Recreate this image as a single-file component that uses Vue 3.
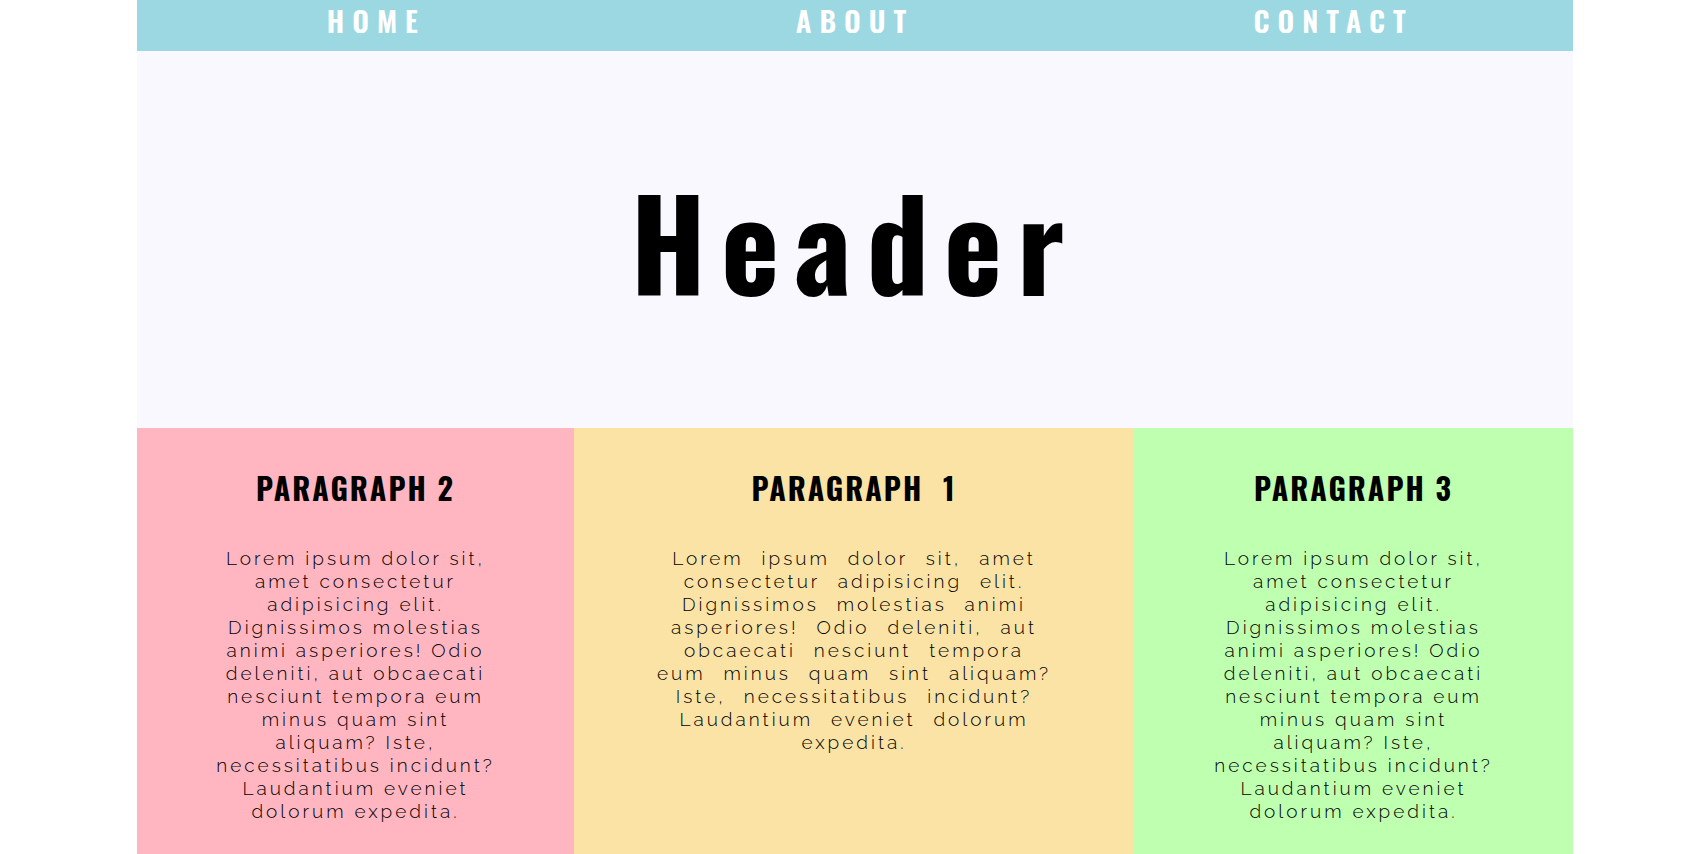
<script setup>
const links = [
  { label: 'HOME', href: '#home' },
  { label: 'ABOUT', href: '#about' },
  { label: 'CONTACT', href: '#contact' },
]

const narrowLines = [
  'Lorem ipsum dolor sit,',
  'amet consectetur',
  'adipisicing elit.',
  'Dignissimos molestias',
  'animi asperiores! Odio',
  'deleniti, aut obcaecati',
  'nesciunt tempora eum',
  'minus quam sint',
  'aliquam? Iste,',
  'necessitatibus incidunt?',
  'Laudantium eveniet',
  'dolorum expedita.',
]

const wideLines = [
  'Lorem ipsum dolor sit, amet',
  'consectetur adipisicing elit.',
  'Dignissimos molestias animi',
  'asperiores! Odio deleniti, aut',
  'obcaecati nesciunt tempora',
  'eum minus quam sint aliquam?',
  'Iste, necessitatibus incidunt?',
  'Laudantium eveniet dolorum',
  'expedita.',
]

const columns = [
  { title: 'PARAGRAPH 2', tone: 'pink', lines: narrowLines },
  { title: 'PARAGRAPH 1', tone: 'yellow', lines: wideLines },
  { title: 'PARAGRAPH 3', tone: 'green', lines: narrowLines },
]
</script>

<template>
  <div class="page">
    <nav class="nav">
      <a v-for="link in links" :key="link.label" class="nav-link" :href="link.href">{{ link.label }}</a>
    </nav>
    <header class="hero">
      <h1 class="hero-title">Header</h1>
    </header>
    <main class="columns">
      <section v-for="col in columns" :key="col.title" class="column" :class="col.tone">
        <h2 class="column-title">{{ col.title }}</h2>
        <p class="column-text">
          <span v-for="line in col.lines" :key="line" class="line">{{ line }} </span>
        </p>
      </section>
    </main>
  </div>
</template>

<style>
body {
  margin: 0;
  background: #ffffff;
}
</style>

<style scoped>
.page {
  box-sizing: border-box;
  display: flex;
  flex-direction: column;
  min-height: 100vh;
  padding: 0 135px 0 137px;
  font-family: Raleway, Lato, sans-serif;
  color: #000000;
}

.nav {
  display: grid;
  grid-template-columns: repeat(3, 1fr);
  background: #9bd8e1;
  padding-bottom: 11px;
}

.nav-link {
  font-family: Oswald, 'Liberation Sans Narrow', sans-serif;
  font-size: 29px;
  font-weight: 600;
  line-height: 40px;
  letter-spacing: 8px;
  text-align: center;
  text-decoration: none;
  color: #ffffff;
}

.hero {
  display: flex;
  align-items: center;
  justify-content: center;
  padding: 95px 0 93px;
  background: #f9f8ff;
}

.hero-title {
  margin: 0;
  font-family: Oswald, 'Liberation Sans Narrow', sans-serif;
  font-size: 124px;
  font-weight: 700;
  line-height: 189px;
  letter-spacing: 15px;
}

.columns {
  flex: 1;
  display: grid;
  grid-template-columns: 437fr 560fr 439fr;
}

.column {
  padding: 40px 0 24px;
  text-align: center;
}

.pink {
  background: #ffb6c1;
}

.yellow {
  background: #fae3a5;
  word-spacing: 10px;
}

.green {
  background: #bfffb0;
}

.column-title {
  margin: 0 0 39px;
  font-family: Oswald, 'Liberation Sans Narrow', sans-serif;
  font-size: 30px;
  font-weight: 700;
  line-height: 40px;
  letter-spacing: 2px;
}

.column-text {
  margin: 0;
  font-size: 19px;
  font-weight: 300;
  line-height: 23px;
  letter-spacing: 3px;
}

.line {
  display: block;
  white-space: nowrap;
}
</style>
